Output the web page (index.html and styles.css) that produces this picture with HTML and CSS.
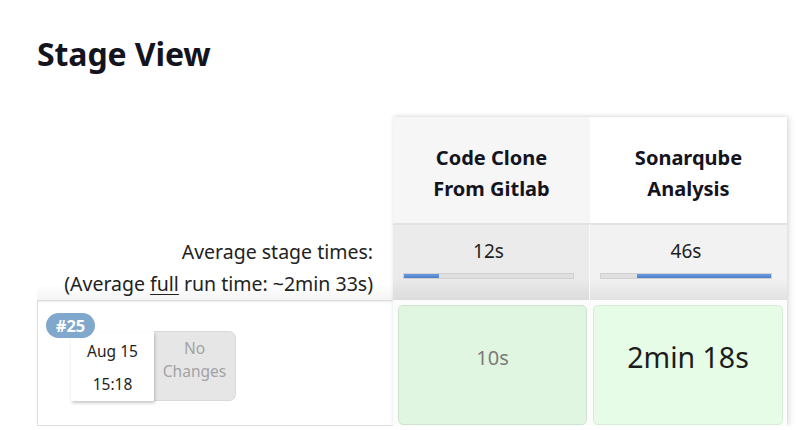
FILE: index.html
```html
<!DOCTYPE html>
<html>
<head>
<meta charset="utf-8">
<link rel="stylesheet" href="styles.css">
</head>
<body>
<div class="page">
  <h1 class="title">Stage View</h1>
  <div class="stage-view">
    <div class="labels">
      <div class="label-head"></div>
      <div class="label-avg">
        <div>Average stage times:</div>
        <div>(Average <u>full</u> run time: ~2min 33s)</div>
      </div>
      <div class="build-row">
        <span class="badge">#25</span>
        <div class="build-info">
          <div class="date-box">
            <div>Aug 15</div>
            <div>15:18</div>
          </div>
          <div class="changes">No<br>Changes</div>
        </div>
      </div>
    </div>
    <div class="stages">
      <div class="stage odd">
        <div class="stage-head">Code Clone<br>From Gitlab</div>
        <div class="stage-avg">
          <div class="avg-time">12s</div>
          <div class="bar"><div class="fill" style="margin-left:0%;width:21%"></div></div>
        </div>
        <div class="stage-cell-wrap"><div class="stage-cell small">10s</div></div>
      </div>
      <div class="stage even">
        <div class="stage-head">Sonarqube<br>Analysis</div>
        <div class="stage-avg">
          <div class="avg-time">46s</div>
          <div class="bar"><div class="fill" style="margin-left:21%;width:79%"></div></div>
        </div>
        <div class="stage-cell-wrap"><div class="stage-cell big">2min 18s</div></div>
      </div>
    </div>
  </div>
</div>
</body>
</html>
```
FILE: styles.css
```css
html, body {
  margin: 0;
  padding: 0;
  background: #fff;
}
body {
  font-family: "Noto Sans", "Open Sans", sans-serif;
  color: #1a1a1a;
}
.page {
  padding: 0 0 0 37px;
}
.title {
  margin: 0;
  padding-top: 33px;
  height: 117px;
  box-sizing: border-box;
  font-size: 32px;
  line-height: 42px;
  font-weight: 700;
  color: #14141f;
  letter-spacing: -0.1px;
}
.stage-view {
  display: flex;
  align-items: flex-start;
}
.labels {
  width: 356px;
  display: flex;
  flex-direction: column;
}
.label-head {
  height: 106px;
}
.label-avg {
  height: 77px;
  box-sizing: border-box;
  padding: 13px 20px 0 0;
  text-align: right;
  font-size: 19.5px;
  line-height: 32px;
  color: #222;
  background: linear-gradient(#fff 80%, #f4f4f4);
}
.label-avg u {
  text-decoration-thickness: 1px;
  text-underline-offset: 3px;
}
.build-row {
  position: relative;
  height: 126px;
  box-sizing: border-box;
  border-top: 1px solid #dcdcdc;
  border-left: 1px solid #dedede;
  border-bottom: 1px solid #dedede;
  box-shadow: inset 0 3px 2px -2px #ececec;
}
.badge {
  position: absolute;
  left: 8px;
  top: 12px;
  z-index: 2;
  width: 49px;
  height: 25px;
  border-radius: 13px;
  background: #7fa8cc;
  color: #fff;
  font-weight: 700;
  font-size: 16.5px;
  line-height: 25px;
  text-align: center;
}
.build-info {
  display: flex;
  margin: 31px 0 0 33px;
}
.date-box {
  width: 83px;
  height: 69px;
  box-sizing: border-box;
  background: #fff;
  box-shadow: 1px 2px 3px rgba(0, 0, 0, 0.22);
  text-align: center;
  font-size: 15.5px;
  line-height: 33px;
  padding-top: 3px;
  color: #1e1e1e;
  position: relative;
  z-index: 1;
}
.changes {
  width: 82px;
  height: 70px;
  box-sizing: border-box;
  margin-top: -1px;
  background: #e6e6e6;
  border: 1px solid #dadada;
  border-left: none;
  border-radius: 0 7px 7px 0;
  color: #a3a3a3;
  font-size: 15.5px;
  line-height: 23px;
  text-align: center;
  padding-top: 5px;
}
.stages {
  display: flex;
  box-shadow: 2px 0 6px rgba(0, 0, 0, 0.14), 0 -1px 3px rgba(0, 0, 0, 0.05);
}
.stage {
  width: 197px;
  display: flex;
  flex-direction: column;
}
.stage-head {
  height: 106px;
  box-sizing: border-box;
  padding-top: 25px;
  text-align: center;
  font-weight: 700;
  font-size: 20px;
  line-height: 31px;
  color: #14141f;
}
.odd .stage-head { background: #f6f6f6; }
.even .stage-head { background: #fff; }
.stage-avg {
  height: 77px;
  box-sizing: border-box;
  border-top: 2px solid #e2e2e2;
  padding: 12px 15px 0 10px;
}
.odd .stage-avg { background: linear-gradient(#ebebeb 0%, #ebebeb 70%, #dcdcdc 100%); }
.even .stage-avg { background: linear-gradient(#f2f2f2 0%, #f2f2f2 70%, #e2e2e2 100%); }
.odd .stage-avg { border-right: 1px solid #f8f8f8; }
.avg-time {
  text-align: center;
  font-size: 19px;
  line-height: 28px;
  color: #1e1e1e;
}
.bar {
  margin-top: 8px;
  height: 6px;
  box-sizing: border-box;
  border: 1px solid #d0d0d0;
  background: #e0e0e0;
  display: flex;
}
.fill {
  height: 4px;
  margin-top: 0;
  background: linear-gradient(#6d9be0, #4a7fcb);
}
.stage-cell-wrap {
  height: 126px;
  box-sizing: border-box;
  padding: 5px 3px 1px 5px;
  background: #fcfcfc;
}
.even .stage-cell-wrap { padding: 5px 4px 1px 3px; }
.stage-cell {
  height: 100%;
  box-sizing: border-box;
  border: 1px solid #cfe4cf;
  border-radius: 5px;
  display: flex;
  align-items: center;
  justify-content: center;
}
.odd .stage-cell { background: #e0f6e0; }
.even .stage-cell { background: #e6fce6; border-color: #d6ecd6; }
.small {
  font-size: 20px;
  color: #7b7b7b;
  padding-bottom: 16px;
}
.big {
  font-size: 28.5px;
  color: #1c1c1c;
  padding-bottom: 16px;
}
```
